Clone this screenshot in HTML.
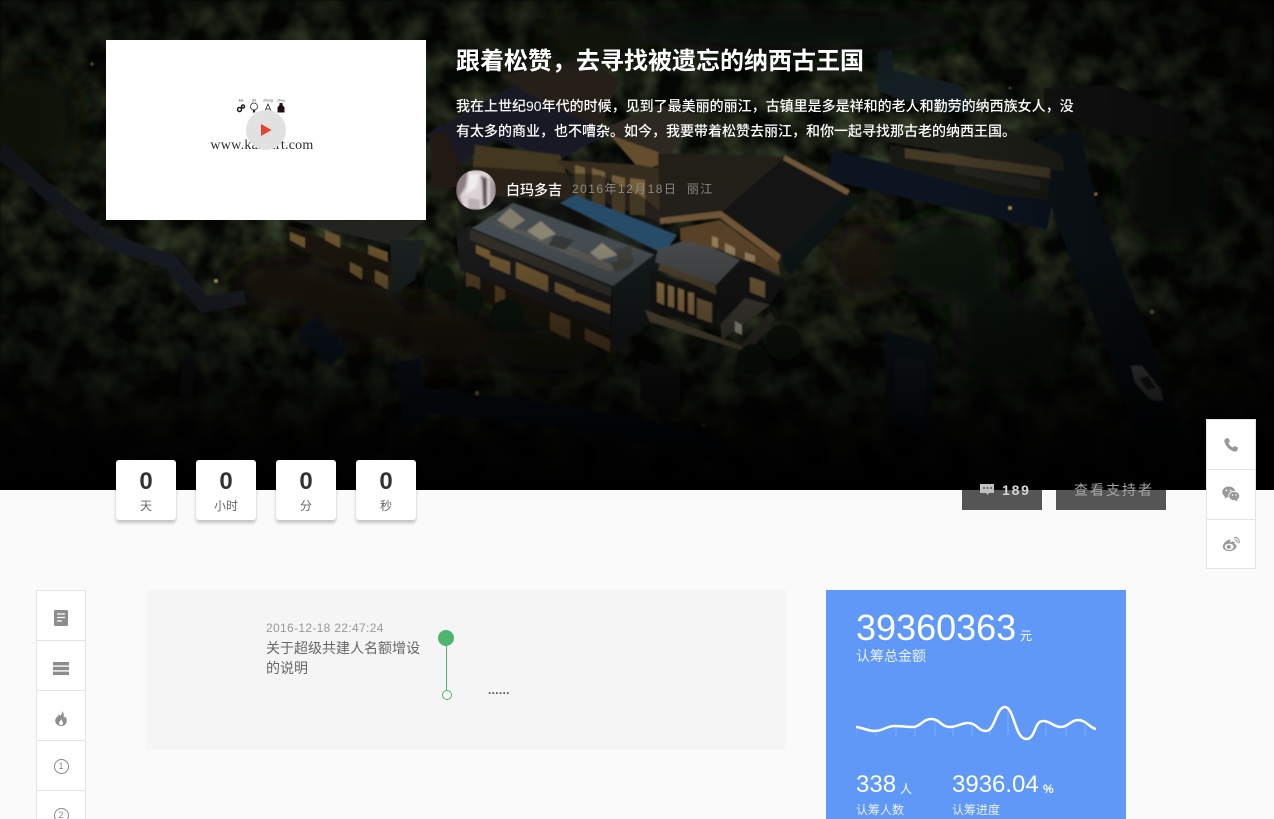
<!DOCTYPE html>
<html lang="zh-CN">
<head>
<meta charset="utf-8">
<title>跟着松赞，去寻找被遗忘的纳西古王国</title>
<style>
*{box-sizing:border-box;margin:0;padding:0}
html,body{width:1274px;height:819px;overflow:hidden;background:#fafafa}
body{position:relative;font-family:"Liberation Sans","Noto Sans CJK SC",sans-serif;color:#666}
.abs{position:absolute;white-space:nowrap}
#hero{position:absolute;left:0;top:0;width:1274px;height:490px;display:block}
#video{position:absolute;left:106px;top:40px;width:320px;height:180px;background:#fff;overflow:hidden}
h1{position:absolute;left:456px;top:44px;font-size:24px;line-height:36px;font-weight:700;color:#fff;white-space:nowrap}
.desc{position:absolute;left:456px;top:94px;width:625px;font-size:14px;line-height:25px;color:#fff;font-weight:500}
.cd{position:absolute;top:460px;width:60px;height:60px;background:#fff;border-radius:3px;box-shadow:0 3px 3px rgba(0,0,0,.22);text-align:center}
.cd b{display:block;font-size:24px;line-height:24px;margin-top:10px;color:#333;font-weight:700}
.cd span{display:block;font-size:12px;line-height:16px;margin-top:4px;color:#666}
.btn{position:absolute;top:490px;height:20px;background:#555}
.side{position:absolute;width:50px;background:#fff;border:1px solid #e4e4e4}
.side div{height:50px;border-bottom:1px solid #e4e4e4;display:flex;align-items:center;justify-content:center}
.side div:last-child{border-bottom:0}
#tl{position:absolute;left:146px;top:590px;width:640px;height:160px;background:#f5f5f5}
#blue{position:absolute;left:826px;top:590px;width:300px;height:229px;background:#6098f7;color:#fff;overflow:hidden}
</style>
</head>
<body>
<svg id="hero" viewBox="0 0 1274 490" xmlns="http://www.w3.org/2000/svg">
<defs>
<filter id="tx" x="0" y="0" width="100%" height="100%">
<feTurbulence type="fractalNoise" baseFrequency="0.035" numOctaves="3" seed="7"/>
<feColorMatrix type="matrix" values="0 0 0 0 .075  0 0 0 0 .105  0 0 0 0 .045  1.6 0 0 0 -.55"/>
<feGaussianBlur stdDeviation="1.200"/>
</filter>
<filter id="s"><feGaussianBlur stdDeviation="0.8"/></filter>
<filter id="b6"><feGaussianBlur stdDeviation="14"/></filter>
<linearGradient id="fade" x1="0" y1="0" x2="0" y2="1">
<stop offset="0" stop-color="#000" stop-opacity=".5"/>
<stop offset=".16" stop-color="#000" stop-opacity=".12"/>
<stop offset=".5" stop-color="#000" stop-opacity=".08"/>
<stop offset=".72" stop-color="#000" stop-opacity=".5"/>
<stop offset=".9" stop-color="#000" stop-opacity=".92"/>
<stop offset="1" stop-color="#000"/>
</linearGradient>
<linearGradient id="edge" x1="0" y1="0" x2="1" y2="0">
<stop offset="0" stop-color="#000" stop-opacity=".35"/>
<stop offset=".2" stop-color="#000" stop-opacity="0"/>
<stop offset=".75" stop-color="#000" stop-opacity="0"/>
<stop offset="1" stop-color="#000" stop-opacity=".7"/>
</linearGradient>
</defs>
<rect width="1274" height="490" fill="#050704"/>
<rect width="1274" height="490" filter="url(#tx)"/>
<g filter="url(#b6)">
<ellipse cx="30" cy="120" rx="50" ry="55" fill="#161d0d"/>
<ellipse cx="290" cy="285" rx="60" ry="30" fill="#1a1409"/>
<ellipse cx="360" cy="310" rx="50" ry="35" fill="#1d150a"/>
<ellipse cx="450" cy="335" rx="50" ry="35" fill="#1d150b"/>
<ellipse cx="550" cy="350" rx="60" ry="30" fill="#12170c"/>
<ellipse cx="860" cy="260" rx="30" ry="40" fill="#1a130a"/>
<ellipse cx="950" cy="260" rx="60" ry="45" fill="#10170a"/>
<ellipse cx="1010" cy="340" rx="60" ry="50" fill="#0e1508"/>
<ellipse cx="1170" cy="190" rx="50" ry="55" fill="#0f150a"/>
<ellipse cx="800" cy="30" rx="180" ry="25" fill="#10170b"/>
<ellipse cx="590" cy="40" rx="50" ry="30" fill="#141d0d"/>
</g>
<g filter="url(#s)">
<!-- left road -->
<path d="M0 150L25 172L65 207L106 240L171 262L204 305L245 297" fill="none" stroke="#1b232c" stroke-width="15"/>
<path d="M306 325L339 358M408 360L415 425M420 400L530 412L640 430L720 450" fill="none" stroke="#0f1622" stroke-width="24"/>
<path d="M190 355L186 395" stroke="#12181f" stroke-width="12"/>
<!-- right road -->
<path d="M830 165L960 195L1050 215" fill="none" stroke="#0f1620" stroke-width="30"/>
<path d="M1058 135L1075 210L1105 285L1135 360L1165 450" fill="none" stroke="#0d131b" stroke-width="44"/>
<path d="M885 330L935 345L930 440L885 420Z" fill="#10151a"/>
<path d="M895 355L925 360V420L895 410Z" fill="#171b20"/>
<path d="M640 360L680 372V420L640 400Z" fill="#121516"/>
<!-- top right dim buildings -->
<path d="M878 52L892 50L894 70L960 85L975 115L900 100L878 90Z" fill="#182128"/>
<path d="M1044 88L1115 85L1190 118L1186 140L1110 135L1044 110Z" fill="#161818"/>
<!-- right long building -->
<path d="M880 135L1005 128L1062 155L1065 172L1025 165L890 142Z" fill="#22201e"/>
<path d="M890 145L1050 170L1048 200L1000 195L890 165Z" fill="#1c1b19"/>
<path d="M905 148L1050 168L1050 178L905 158Z" fill="#4c3f2a"/>
<path d="M955 165L1040 180L1040 190L955 173Z" fill="#262520"/>
<!-- upper left roofs -->
<path d="M425 135L520 82L610 132L560 160L495 140L460 165Z" fill="#1b1f29"/>
<path d="M500 75L580 60L620 78L600 128L530 95Z" fill="#2a241c"/>
<path d="M430 135L445 130L470 185L432 190Z" fill="#261f15"/>
<path d="M475 145L560 155L575 200L470 195Z" fill="#4a3c24"/>
<path d="M600 130L658 105L700 115L670 155L620 145Z" fill="#332d25"/>
<path d="M610 135L680 160L640 170Z" fill="#6f5733"/>
<!-- left building lower -->
<path d="M290 220H425L395 245L372 240Z" fill="#282623"/>
<path d="M287 225L390 262L388 290L290 245Z" fill="#1e1911"/>
<path d="M290 232L305 238V248L290 240ZM325 230L340 236V248L325 240ZM368 245L388 252V262L368 254ZM350 262L362 268V280L350 272ZM375 270L388 276V290L375 282Z" fill="#6f5932"/>
<path d="M390 240H425L415 280L392 295Z" fill="#1a2024"/>
<!-- back main section -->
<path d="M555 160L640 165L700 175L670 225L610 205Z" fill="#3d3223"/>
<path d="M575 165L585 168V205L575 205ZM592 168L605 172V210L592 206ZM612 175L625 178V215L612 210ZM630 178L645 180V215L630 215Z" fill="#806841"/>
<path d="M455 165L600 175L640 195L665 215L660 260L510 205L460 222Z" fill="#191714" opacity=".55"/>
<!-- pool -->
<path d="M560 203L575 195L677 235L670 245L660 252Z" fill="#2a5273"/>
<!-- main terrace + facade -->
<path d="M456 233L470 225L612 285L610 350L460 270Z" fill="#1a1c1d"/>
<path d="M472 228L513 203L655 255L613 286Z" fill="#4b5359"/>
<path d="M490 222L530 238L610 272L620 268L550 238Z" fill="#5f605a"/>
<path d="M470 229L612 288L611 297L470 240Z" fill="#343229"/>
<path d="M476 245L490 251V260L476 253ZM490 255L510 262V275L490 266ZM516 262L548 276V292L516 278ZM555 282L575 290V302L555 292ZM575 292L610 305V314L575 300Z" fill="#7a6035"/>
<path d="M465 270L612 332L610 352L465 295Z" fill="#1b170f"/>
<path d="M466 272L480 278V296L466 290ZM495 285L505 290V308L495 302ZM550 312L570 320V340L550 330ZM585 328L610 340V352L585 340Z" fill="#5a4328"/>
<!-- umbrellas -->
<path d="M497 220L510 208L525 220L512 229Z" fill="#8f8974"/>
<path d="M527 231L541 221L556 234L541 240Z" fill="#96907c"/>
<path d="M590 253L602 243L618 255L600 260Z" fill="#96907c"/>
<path d="M615 250L632 245L632 262L620 265Z" fill="#444440"/>
<path d="M555 235L575 240L565 250L548 245Z" fill="#3a3d3c"/>
<path d="M610 262L635 258L630 268L615 272Z" fill="#42423e"/>
<!-- right wing -->
<path d="M613 286L660 250L655 320L611 350Z" fill="#171a1f"/>
<path d="M658 250L690 238L740 260L716 285L655 262Z" fill="#4d4f51"/>
<path d="M660 263L715 285L716 294L658 270Z" fill="#544731"/>
<path d="M650 270L716 295L718 325L700 325L650 310Z" fill="#131417"/>
<path d="M657 282L664 284V305L657 302ZM668 285L674 287V308L668 306ZM678 288L684 290V312L678 310ZM688 292L694 293V315L688 313Z" fill="#9a7c4b"/>
<path d="M697 298L712 303V323L697 318Z" fill="#7a6440"/>
<path d="M645 310L740 345L750 353L650 322Z" fill="#5c523d"/>
<path d="M740 345L770 312L775 318L750 353Z" fill="#35322b"/>
<path d="M716 285L740 260L785 280L770 305L742 320L720 322Z" fill="#141518"/>
<path d="M750 277L765 282V298L750 292Z" fill="#7a623c"/>
<path d="M722 340L770 305L745 298L720 325Z" fill="#454238"/>
<path d="M735 321L742 325V335L735 332Z" fill="#b8b1a3"/>
<!-- big roofs -->
<path d="M658 153L785 157L721 213L660 220Z" fill="#27231f"/>
<path d="M785 157L850 192L781 257L721 213Z" fill="#121418"/>
<path d="M785 155L850 190L847 195L783 160Z" fill="#7a603f"/>
<path d="M660 218L721 211L781 255L778 262L720 218L660 224Z" fill="#7a5d3a"/>
<path d="M680 228L720 220L778 262L780 275L720 250L680 240Z" fill="#5e462a"/>
<path d="M781 257L850 192L858 200L790 275Z" fill="#0f1216"/>
<path d="M712 236L718 238V248L712 246ZM725 243L735 248V256L725 252ZM745 252L755 256V262L745 260Z" fill="#9c8862"/>
<!-- foreground trees -->
<g fill="#10170b">
<circle cx="507" cy="316" r="17"/><circle cx="440" cy="279" r="15"/><circle cx="470" cy="300" r="14"/>
<circle cx="783" cy="342" r="18"/><circle cx="753" cy="360" r="16"/>
</g>
<!-- car -->
<path d="M1131 366L1142 366L1161 390L1163 401L1150 399L1135 382Z" fill="#8c8e8e"/>
<path d="M1139 378L1148 376L1156 388L1147 390Z" fill="#333"/>
<!-- lights -->
<g fill="#d2c070">
<circle cx="92" cy="64" r="1.6" opacity=".7"/><circle cx="216" cy="281" r="2"/><circle cx="477" cy="393" r="2"/>
<circle cx="1010" cy="88" r="1.4" opacity=".5"/><circle cx="1096" cy="194" r="1.6"/><circle cx="1010" cy="208" r="1.6"/>
<circle cx="1152" cy="312" r="2"/><circle cx="704" cy="425" r="1.6" opacity=".7"/>
</g>
</g>
<rect width="1274" height="490" fill="url(#fade)"/>
<rect width="1274" height="490" fill="url(#edge)"/>
</svg>

<!-- video -->
<div id="video">
<svg class="abs" style="left:0;top:0" width="320" height="180" viewBox="0 0 320 180">
<g fill="#444" font-family="Liberation Sans,sans-serif" font-size="3.500" text-anchor="middle"><text x="135" y="61.500">kai</text><text x="148" y="61.500">shi</text><text x="162" y="61.500">zhong</text><text x="175" y="61.500">zhou</text></g>
<g fill="none" stroke="#222" stroke-width="1.500">
<circle cx="133.500" cy="69.500" r="2"/><circle cx="137" cy="66.500" r="1.500"/>
<circle cx="148" cy="66.500" r="3.500" stroke-width=".8"/><path d="M148 70V72.500" stroke-width="2.200"/>
<path d="M159 71L162 64L165 71M160 69H164" stroke-width=".8"/>
</g>
<path d="M173.500 63H176.500V65L178.500 67.500V72.500H171.500V67.500L173.500 65Z" fill="#201015"/>
<text x="156" y="109" font-family="Liberation Serif,serif" font-size="14" letter-spacing=".25" fill="#2b2b2b" text-anchor="middle">www.kaixart.com</text>
<circle cx="160" cy="90" r="20" fill="#e1e1e1"/>
<path d="M155 84L165.500 90L155 96Z" fill="#e8412f"/>
</svg>
</div>

<h1>跟着松赞，去寻找被遗忘的纳西古王国</h1>
<div class="desc">我在上世纪90年代的时候，见到了最美丽的丽江，古镇里是多是祥和的老人和勤劳的纳西族女人，没有太多的商业，也不嘈杂。如今，我要带着松赞去丽江，和你一起寻找那古老的纳西王国。</div>

<svg class="abs" style="left:456px;top:170px" width="40" height="40" viewBox="0 0 40 40">
<defs><clipPath id="av"><circle cx="20" cy="20" r="20"/></clipPath><filter id="avb"><feGaussianBlur stdDeviation="1"/></filter></defs>
<g clip-path="url(#av)"><g filter="url(#avb)">
<rect width="40" height="40" fill="#dcd3d6"/>
<path d="M0 0H12L10 16L4 26L8 40H0Z" fill="#8c7d82"/>
<path d="M24 6L26 10L27 36L31 36L31 8Z" fill="#5d4f54"/>
<path d="M34 6L40 14V34L34 38Z" fill="#a69aa0"/>
<path d="M12 28L24 30V40H12Z" fill="#bcb0b4"/>
<path d="M14 4H24L20 18L10 24Z" fill="#f1ecee"/>
</g></g>
</svg>
<div class="abs" style="left:506px;top:180px;font-size:14px;line-height:20px;color:#fff;font-weight:500">白玛多吉</div>
<div class="abs" style="left:572px;top:180px;font-size:12px;line-height:18px;color:#8d8a85;letter-spacing:1.450px">2016年12月18日&nbsp;&nbsp;丽江</div>

<!-- countdown -->
<div class="cd" style="left:116px"><b>0</b><span>天</span></div>
<div class="cd" style="left:196px"><b>0</b><span>小时</span></div>
<div class="cd" style="left:276px"><b>0</b><span>分</span></div>
<div class="cd" style="left:356px"><b>0</b><span>秒</span></div>

<!-- buttons -->
<div class="btn" style="left:962px;width:80px"></div>
<div class="btn" style="left:1056px;width:110px"></div>
<svg class="abs" style="left:980px;top:483px" width="15" height="14" viewBox="0 0 15 14"><path d="M0 1H14V10H9L7.500 12L6 10H0Z" fill="#c0c0c0"/><path d="M3 5H5M6.500 5H8.500M10 5H12" stroke="#555" stroke-width="1.500"/></svg>
<div class="abs" style="left:1002px;top:481px;font-size:14px;line-height:18px;font-weight:700;letter-spacing:1.800px;color:#d8d8d8">189</div>
<div class="abs" style="left:1074px;top:481px;font-size:14px;line-height:18px;letter-spacing:2px;color:#a6a6a6">查看支持者</div>

<!-- right side -->
<div class="side" style="left:1206px;top:419px;height:150px">
<div><svg width="16" height="16" viewBox="0 0 16 16"><path d="M3 1.500L5.500 1L7 4.500L5.500 6C6.300 8.200 7.800 9.700 10 10.500L11.500 9L15 10.500L14.500 13C14 14.500 12.500 15 11 14.500C6.500 13.200 2.800 9.500 1.500 5C1 3.500 1.800 2 3 1.500Z" fill="#999"/></svg></div>
<div style="padding-bottom:1px"><svg width="18" height="16" viewBox="0 0 18 16"><ellipse cx="6.800" cy="6" rx="6.500" ry="5.500" fill="#999"/><path d="M3 9.500L2.500 12.500L6 10.500Z" fill="#999"/><ellipse cx="12.200" cy="10" rx="5.500" ry="4.700" fill="#999" stroke="#fff" stroke-width=".8"/><path d="M15 13.500L15.800 15.500L13 14.500Z" fill="#999"/><circle cx="10.500" cy="9" r=".8" fill="#fff"/><circle cx="14" cy="9" r=".8" fill="#fff"/><circle cx="4.500" cy="4.500" r=".9" fill="#fff"/><circle cx="8.500" cy="4.500" r=".9" fill="#fff"/></svg></div>
<div style="padding-bottom:3px"><svg width="19" height="16" viewBox="0 0 19 16"><path d="M7.500 3.500C4 4.500 .5 8 .8 11C1.200 14 5 15.500 8.500 15C12 14.500 14.500 12.500 14.500 10C14.500 8.700 13.300 8.200 12.500 8C13 6.500 12.500 5.500 11 5.500C10 5.500 9 6 8 6.500C8.700 4.500 8.500 3.300 7.500 3.500Z" fill="#999"/><ellipse cx="7.200" cy="10.800" rx="4.500" ry="3.200" fill="#fff"/><circle cx="6.800" cy="10.900" r="2" fill="#999"/><path d="M12.500 1.500C15.500 1 18 4 17 7M12.800 3.800C14.300 3.500 15.500 5 15 6.500" fill="none" stroke="#999" stroke-width="1.100" stroke-linecap="round"/></svg></div>
</div>

<!-- left side -->
<div class="side" style="left:36px;top:590px;height:240px;border-bottom:0">
<div style="padding-top:5px"><svg width="14" height="16" viewBox="0 0 14 16"><rect width="14" height="16" rx="1.500" fill="#8d8d8d"/><path d="M3 4H11M3 7.500H11M3 11H8" stroke="#fff" stroke-width="1.200"/></svg></div>
<div style="padding-top:5px"><svg width="16" height="13" viewBox="0 0 16 13"><path d="M0 0H16V3.400H0ZM0 4.800H16V8.200H0ZM0 9.600H16V13H0Z" fill="#8d8d8d"/></svg></div>
<div style="padding-top:5px"><svg width="12" height="15" viewBox="0 0 12 15"><path d="M7 0C7.500 2.500 6 4 5 5C4.800 4 4.200 3.500 3.500 3.200C3.600 5 1.500 6 .5 8C-.6 11 1.500 15 6 15C10.500 15 12.500 11.500 11.500 8C11 6.300 10.400 6 9.800 5.200C9.700 6 9.400 6.600 8.800 7C9 4.500 8.800 1.500 7 0Z" fill="#8d8d8d"/><path d="M6 8C6.200 9.500 4 10.500 4 12.300C4 13.500 5 14 6 14C7.200 14 8.200 13.300 8 12C7.800 10.500 7 9.500 6 8Z" fill="#fff"/></svg></div>
<div style="font-size:9px;color:#888;padding-top:2px"><span style="display:block;width:15px;height:15px;border:1px solid #888;border-radius:50%;text-align:center;line-height:13px">1</span></div>
<div style="font-size:9px;color:#888;padding-bottom:1px"><span style="display:block;width:15px;height:15px;border:1px solid #888;border-radius:50%;text-align:center;line-height:13px">2</span></div>
</div>

<!-- timeline -->
<div id="tl"></div>
<div class="abs" style="left:266px;top:620px;font-size:12px;line-height:16px;color:#999;letter-spacing:.33px">2016-12-18 22:47:24</div>
<div class="abs" style="left:266px;top:638px;width:160px;white-space:normal;font-size:14px;line-height:20px;color:#666">关于超级共建人名额增设的说明</div>
<svg class="abs" style="left:436px;top:628px" width="22" height="74" viewBox="0 0 22 74">
<path d="M10.500 10V62" stroke="#4eb56f" stroke-width="1"/>
<circle cx="10" cy="10" r="8" fill="#4eb56f"/>
<circle cx="11" cy="67" r="4.500" fill="#f7f7f7" stroke="#4eb56f" stroke-width="1"/>
</svg>
<div class="abs" style="left:488px;top:683px;font-size:12px;line-height:14px;color:#555;font-weight:700;letter-spacing:.3px">......</div>

<!-- blue -->
<div id="blue">
<div class="abs" style="left:30px;top:18px;font-size:36px;line-height:40px">39360363</div>
<div class="abs" style="left:194px;top:38px;font-size:12px;line-height:16px">元</div>
<div class="abs" style="left:30px;top:56px;font-size:14px;line-height:20px;color:#eaf1ff">认筹总金额</div>
<svg class="abs" style="left:30px;top:110px" width="240" height="50" viewBox="0 0 240 50">
<g stroke="#fff" stroke-opacity=".18" stroke-width="1"><path d="M0 30V36M20 28V36M40 26V36M59 26V36M79 20V36M97 26V36M116 24V36M134 30V36M152 10V36M190 20V36M210 26V36M229 24V36"/></g>
<path d="M0 27C8 28 12 31 19 31C27 31 31 26 38 26C46 26 50 27 57 27C64 27 67 19 75 19C84 19 85 27 94 27C101 27 105 23 112 23C121 23 122 31 130 31C139 31 140 7 149 7C158 7 159 39 170 39C180 39 178 21 187 21C195 21 197 27 205 27C212 27 215 20 222 20C230 20 234 28 240 29" fill="none" stroke="#fff" stroke-width="2.500"/>
</svg>
<div class="abs" style="left:30px;top:180px;font-size:24px;line-height:30px">338</div>
<div class="abs" style="left:74px;top:191px;font-size:12px;line-height:16px">人</div>
<div class="abs" style="left:126px;top:180px;font-size:24px;line-height:30px">3936.04</div>
<div class="abs" style="left:217px;top:191px;font-size:12px;line-height:16px;font-weight:700">%</div>
<div class="abs" style="left:30px;top:212px;font-size:12px;line-height:16px;color:#eaf1ff">认筹人数</div>
<div class="abs" style="left:126px;top:212px;font-size:12px;line-height:16px;color:#eaf1ff">认筹进度</div>
</div>
</body>
</html>
